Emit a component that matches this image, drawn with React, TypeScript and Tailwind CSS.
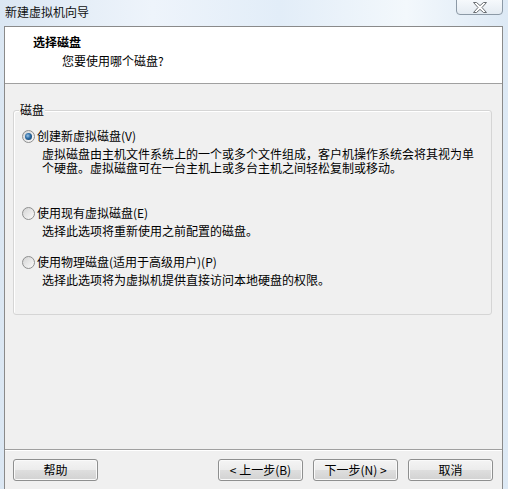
import React from 'react';

type Option = { label: string; text: string; checked?: boolean };

const OPTIONS: Option[] = [
  {
    label: '创建新虚拟磁盘(V)',
    text: '虚拟磁盘由主机文件系统上的一个或多个文件组成，客户机操作系统会将其视为单个硬盘。虚拟磁盘可在一台主机上或多台主机之间轻松复制或移动。',
    checked: true,
  },
  { label: '使用现有虚拟磁盘(E)', text: '选择此选项将重新使用之前配置的磁盘。' },
  { label: '使用物理磁盘(适用于高级用户)(P)', text: '选择此选项将为虚拟机提供直接访问本地硬盘的权限。' },
];

function Radio({ checked }: { checked?: boolean }) {
  return (
    <span className="w-[13px] h-[13px] rounded-full border border-[#8e8f8f] bg-gradient-to-br from-[#d4d4d4] to-[#fbfbfb] flex items-center justify-center shrink-0">
      {checked && (
        <span className="w-[7px] h-[7px] rounded-full bg-[radial-gradient(circle_at_40%_40%,#9cc4e6_0%,#2a6aa3_45%,#0d2f52_100%)]" />
      )}
    </span>
  );
}

function Button({ children }: { children: React.ReactNode }) {
  return (
    <button className="w-[85px] h-[22px] rounded-[3px] border border-[#8e8f8f] bg-[linear-gradient(#f4f4f4_0%,#ececec_48%,#dedede_52%,#d2d2d2_100%)] shadow-[inset_0_0_0_1px_#fafafa] text-[12px] leading-[16px] text-black flex items-center justify-center">
      {children}
    </button>
  );
}

export default function App() {
  return (
    <div className="w-[508px] h-[489px] overflow-hidden flex flex-col bg-[linear-gradient(90deg,#dbe7f3_0%,#eef4fb_30%,#e2edf8_55%,#f3f8fc_80%,#dde9f5_100%)] font-['Noto_Sans_CJK_SC',sans-serif] text-[12px] text-black">
      {/* title bar */}
      <div className="relative h-[26px] shrink-0 flex items-center pl-[5px] pb-[3px]">
        <span className="leading-[16px] text-[#111]">新建虚拟机向导</span>
        <div className="absolute top-[-1px] right-[5px] w-[47px] h-[16px] rounded-b-[4px] border border-[#8c99a6] bg-[linear-gradient(#f6f9fc,#e4ebf2)] flex items-center justify-center">
          <svg width="14" height="11" viewBox="0 0 14 11">
            <polygon
              points="0.5,0.5 3.5,0.5 7,3.6 10.5,0.5 13.5,0.5 9,5.5 13.5,10.5 10.5,10.5 7,7.4 3.5,10.5 0.5,10.5 5,5.5"
              fill="#ffffff"
              stroke="#6b6f74"
              strokeWidth="1"
              strokeLinejoin="round"
            />
          </svg>
        </div>
      </div>

      {/* window body */}
      <div className="flex-1 ml-[4px] mr-[5px] border-l border-r border-t border-[#8a8a8a] bg-[#f0f0f0] flex flex-col">
        <div className="h-[57px] shrink-0 bg-white border-b border-[#a0a0a0] pt-[7px]">
          <div className="pl-[28px] font-bold leading-[16px]">选择磁盘</div>
          <div className="pl-[57px] mt-[3px] leading-[16px]">您要使用哪个磁盘?</div>
        </div>

        <div className="relative mt-[26px] ml-[8px] mr-[10px] h-[205px] rounded-[3px] border border-[#d5d5d5] shadow-[inset_1px_1px_0_#ffffff] pt-[17px] pl-[8px]">
          <span className="absolute top-[-9px] left-[5px] px-[1px] bg-[#f0f0f0] leading-[16px]">磁盘</span>
          {OPTIONS.map((o, i) => (
            <div key={i} className={i === 1 ? 'mt-[30px]' : i === 2 ? 'mt-[16px]' : ''}>
              <div className="flex items-center h-[16px]">
                <Radio checked={o.checked} />
                <span className="ml-[2px] leading-[16px]">{o.label}</span>
              </div>
              <p className="mt-[3px] ml-[20px] w-[436px] leading-[14px]">{o.text}</p>
            </div>
          ))}
        </div>

        <div className="flex-1" />

        <div className="border-t border-[#a0a0a0] shadow-[inset_0_1px_0_#ffffff] pt-[9px] pb-[8px] pl-[8px] pr-[9px] flex items-center">
          <Button>帮助</Button>
          <div className="flex-1" />
          <div className="flex gap-[10px]">
            <Button>&lt; 上一步(B)</Button>
            <Button>下一步(N) &gt;</Button>
            <Button>取消</Button>
          </div>
        </div>
      </div>
    </div>
  );
}
